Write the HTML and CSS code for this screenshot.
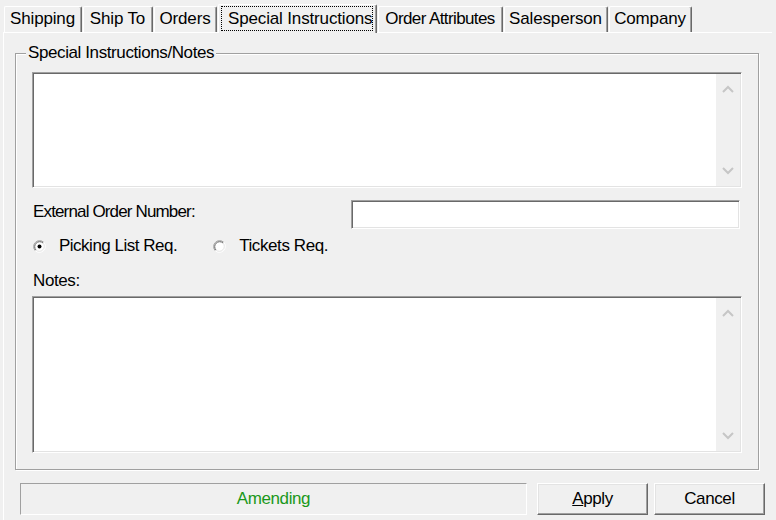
FILE: index.html
```html
<!DOCTYPE html>
<html>
<head>
<meta charset="utf-8">
<title>Special Instructions</title>
<link rel="stylesheet" href="styles.css">
</head>
<body>
<div class="tabs">
  <div class="tab tab-shipping">Shipping</div>
  <div class="tab tab-shipto">Ship To</div>
  <div class="tab tab-orders">Orders</div>
  <div class="tab tab-special active"><span class="focus">Special Instructions</span></div>
  <div class="tab tab-attrs">Order Attributes</div>
  <div class="tab tab-sales">Salesperson</div>
  <div class="tab tab-company">Company</div>
</div>
<div class="page">
  <fieldset class="group">
    <legend>Special Instructions/Notes</legend>
    <div class="memo memo-top">
      <div class="memo-text"></div>
      <div class="sb">
        <div class="sb-btn"><svg width="12" height="8" viewBox="0 0 12 8"><path d="M1 7 L6 2 L11 7" fill="none" stroke="#c6c6c6" stroke-width="2"/></svg></div>
        <div class="sb-btn"><svg width="12" height="8" viewBox="0 0 12 8"><path d="M1 1 L6 6 L11 1" fill="none" stroke="#c6c6c6" stroke-width="2"/></svg></div>
      </div>
    </div>
    <div class="ext-row">
      <span class="label ext-label">External Order Number:</span>
      <div class="input"></div>
    </div>
    <div class="radios">
      <div class="radio">
        <svg class="radio-icon" width="13" height="13" viewBox="0 0 13 13">
          <circle cx="6.5" cy="6.5" r="5.5" fill="#fff"/>
          <path d="M2.26 10.74 A6 6 0 0 1 10.74 2.26" fill="none" stroke="#a0a0a0"/>
          <path d="M10.74 2.26 A6 6 0 0 1 2.26 10.74" fill="none" stroke="#ffffff"/>
          <path d="M2.97 10.03 A5 5 0 0 1 10.03 2.97" fill="none" stroke="#696969"/>
          <path d="M10.03 2.97 A5 5 0 0 1 2.97 10.03" fill="none" stroke="#e3e3e3"/>
          <circle cx="6.5" cy="6.5" r="2" fill="#000"/>
        </svg>
        <span class="picking-label">Picking List Req.</span>
      </div>
      <div class="radio">
        <svg class="radio-icon" width="13" height="13" viewBox="0 0 13 13">
          <circle cx="6.5" cy="6.5" r="5.5" fill="#fff"/>
          <path d="M2.26 10.74 A6 6 0 0 1 10.74 2.26" fill="none" stroke="#a0a0a0"/>
          <path d="M10.74 2.26 A6 6 0 0 1 2.26 10.74" fill="none" stroke="#ffffff"/>
          <path d="M2.97 10.03 A5 5 0 0 1 10.03 2.97" fill="none" stroke="#696969"/>
          <path d="M10.03 2.97 A5 5 0 0 1 2.97 10.03" fill="none" stroke="#e3e3e3"/>
        </svg>
        <span>Tickets Req.</span>
      </div>
    </div>
    <div class="label notes-label">Notes:</div>
    <div class="memo memo-notes">
      <div class="memo-text"></div>
      <div class="sb">
        <div class="sb-btn"><svg width="12" height="8" viewBox="0 0 12 8"><path d="M1 7 L6 2 L11 7" fill="none" stroke="#c6c6c6" stroke-width="2"/></svg></div>
        <div class="sb-btn"><svg width="12" height="8" viewBox="0 0 12 8"><path d="M1 1 L6 6 L11 1" fill="none" stroke="#c6c6c6" stroke-width="2"/></svg></div>
      </div>
    </div>
  </fieldset>
  <div class="footer">
    <div class="status">Amending</div>
    <button class="btn btn-apply"><u>A</u>pply</button>
    <button class="btn btn-cancel">Cancel</button>
  </div>
</div>
</body>
</html>
```
FILE: styles.css
```css
html, body {
  margin: 0;
  padding: 0;
}
body {
  width: 776px;
  height: 520px;
  overflow: hidden;
  background: #f0f0f0;
  color: #000;
  font-family: "Liberation Sans", Arial, sans-serif;
  font-size: 17px;
  letter-spacing: -0.4px;
  line-height: 20px;
}

/* ---------- tab strip ---------- */
.tabs {
  display: flex;
  align-items: flex-end;
  gap: 1px;
  height: 32px;
  padding-left: 4px;
  box-sizing: border-box;
}
.tab {
  box-sizing: border-box;
  height: 26px;
  padding: 0 1px 1px 0;
  line-height: 24px;
  text-align: center;
  letter-spacing: -0.15px;
  border-top: 1px solid #fff;
  border-left: 1px solid #fff;
  border-right: 1px solid #696969;
  border-radius: 2px 2px 0 0;
  box-shadow: inset -1px 0 #a0a0a0;
  white-space: nowrap;
}
.tab-shipping { width: 78px; }
.tab-shipto { width: 70px; }
.tab-orders { width: 63px; }
.tab-special { width: 159px; }
.tab-attrs { width: 125px; letter-spacing: -0.6px; }
.tab-sales { width: 104px; }
.tab-company { width: 83px; }

.tab.active {
  position: relative;
  z-index: 1;
  height: 29px;
  margin-bottom: -1px;
  padding: 1px 3px 0 2px;
  background: #f0f0f0;
}
.focus {
  display: block;
  border: 1px dotted #000;
  padding: 0 2px 0 6px;
  line-height: 23px;
}

/* ---------- page ---------- */
.page {
  box-sizing: border-box;
  height: 488px;
  margin: 0 4px 0 3px;
  border-top: 1px solid #fff;
  border-left: 1px solid #fff;
}

.group {
  margin: 10px 13px 0 11px;
  padding: 9px 16px 16px 16px;
  border: 1px solid #a0a0a0;
  box-shadow: inset 1px 1px #fff, 1px 1px #fff;
  min-width: 0;
}
.group legend {
  margin-left: -6px;
  padding: 0 2px;
  line-height: 20px;
  background: #f0f0f0;
}

.memo {
  display: flex;
  box-sizing: border-box;
  padding: 1px;
  background: #fff;
  border: 1px solid;
  border-color: #a0a0a0 #fff #fff #a0a0a0;
  box-shadow: inset 1px 1px #696969, inset -1px -1px #e3e3e3;
}
.memo-top {
  height: 116px;
}
.memo-notes {
  height: 157px;
  margin-top: 5px;
}
.memo-text {
  flex: 1;
}
.sb {
  width: 24px;
  background: #f0f0f0;
  display: flex;
  flex-direction: column;
  justify-content: space-between;
}
.sb-btn {
  height: 30px;
  display: flex;
  align-items: center;
  justify-content: center;
}
.sb-btn svg {
  display: block;
}

.label {
  padding-left: 1px;
  line-height: 20px;
}
.ext-label {
  letter-spacing: -0.85px;
}
.picking-label {
  letter-spacing: -0.5px;
}

.ext-row {
  display: flex;
  align-items: flex-start;
  margin-top: 12px;
}
.ext-row .label {
  margin-top: 2px;
}
.input {
  box-sizing: border-box;
  width: 389px;
  height: 29px;
  margin-left: auto;
  margin-right: 2px;
  background: #fff;
  border: 1px solid;
  border-color: #a0a0a0 #fff #fff #a0a0a0;
  box-shadow: inset 1px 1px #696969, inset -1px -1px #e3e3e3;
}

.radios {
  display: flex;
  margin-top: 7px;
  padding-left: 1px;
  line-height: 20px;
}
.radio {
  display: flex;
  align-items: center;
  gap: 13px;
}
.radio + .radio {
  margin-left: 36px;
}
.radio-icon {
  display: block;
}

.notes-label {
  margin-top: 15px;
}

/* ---------- footer ---------- */
.footer {
  display: flex;
  margin-top: 13px;
  padding: 0 7px 0 16px;
}
.status {
  box-sizing: border-box;
  width: 507px;
  height: 32px;
  line-height: 30px;
  text-align: center;
  color: #1a981a;
  border: 1px solid;
  border-color: #a0a0a0 #fff #fff #a0a0a0;
}
.btn {
  box-sizing: border-box;
  width: 111px;
  height: 32px;
  padding: 0;
  font: inherit;
  letter-spacing: inherit;
  line-height: 28px;
  color: #000;
  background: #f0f0f0;
  border: 1px solid;
  border-color: #fff #696969 #696969 #fff;
  box-shadow: inset -1px -1px #a0a0a0, inset 1px 1px #e3e3e3;
}
.btn-apply {
  margin-left: 10px;
}
.btn-cancel {
  margin-left: 6px;
}
```
